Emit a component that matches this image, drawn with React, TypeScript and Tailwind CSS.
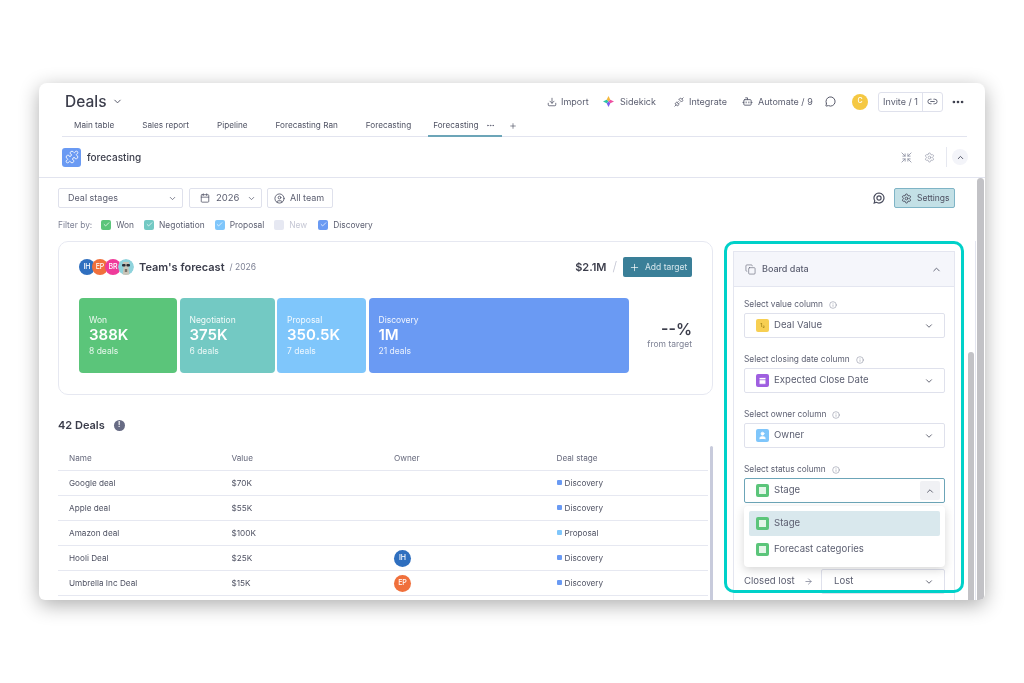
import {
  ArrowRight,
  Bot,
  Calendar,
  Check,
  ChevronDown,
  ChevronUp,
  CircleUser,
  Copy,
  Download,
  Ellipsis,
  Info,
  Link2,
  MessageCircle,
  Plus,
  Puzzle,
  Settings,
  Unplug,
  User,
} from 'lucide-react'
import type {ReactNode} from 'react'

const tabs = ['Main table', 'Sales report', 'Pipeline', 'Forecasting Ran', 'Forecasting']

const filters = [
  {label: 'Won', box: 'bg-[#5bc57a]', gap: 'mr-[10px]'},
  {label: 'Negotiation', box: 'bg-[#73c9c3]', gap: 'mr-[10px]'},
  {label: 'Proposal', box: 'bg-[#7fc6fb]', gap: 'mr-[10px]'},
  {label: 'New', box: 'bg-[#e6e8f2]', gap: 'mr-[11px]', off: true},
  {label: 'Discovery', box: 'bg-[#6a9af3]', gap: ''},
]

const stages = [
  {label: 'Won', value: '388K', deals: '8 deals', cls: 'w-[98px] bg-[#5bc57a]'},
  {label: 'Negotiation', value: '375K', deals: '6 deals', cls: 'w-[95px] bg-[#73c9c3]'},
  {label: 'Proposal', value: '350.5K', deals: '7 deals', cls: 'w-[89px] bg-[#7fc6fb]'},
  {label: 'Discovery', value: '1M', deals: '21 deals', cls: 'w-[260px] bg-[#6a9af3]'},
]

const deals = [
  {name: 'Google deal', value: '$70K', stage: 'Discovery'},
  {name: 'Apple deal', value: '$55K', stage: 'Discovery'},
  {name: 'Amazon deal', value: '$100K', stage: 'Proposal'},
  {name: 'Hooli Deal', value: '$25K', owner: 'IH', stage: 'Discovery'},
  {name: 'Umbrella Inc Deal', value: '$15K', owner: 'EP', stage: 'Discovery'},
]

function SidekickIcon() {
  return (
    <svg width="11" height="11" viewBox="0 0 12 12">
      <path d="M6 0 L8 4 L6 6 L4 4 Z" fill="#f5b83d" />
      <path d="M12 6 L8 8 L6 6 L8 4 Z" fill="#ef4fa0" />
      <path d="M6 12 L4 8 L6 6 L8 8 Z" fill="#7a5cf0" />
      <path d="M0 6 L4 4 L6 6 L4 8 Z" fill="#2fc4a8" />
    </svg>
  )
}

function FocusIcon() {
  return (
    <svg width="11" height="11" viewBox="0 0 12 12" fill="none" stroke="#8d90a2" strokeWidth="0.9" strokeLinecap="round">
      <path d="M1 1 L4.5 4.5 M4.5 2 V4.5 H2" />
      <path d="M11 1 L7.5 4.5 M7.5 2 V4.5 H10" />
      <path d="M1 11 L4.5 7.5 M4.5 10 V7.5 H2" />
      <path d="M11 11 L7.5 7.5 M7.5 10 V7.5 H10" />
    </svg>
  )
}

function ChatGearIcon() {
  return (
    <svg width="12" height="12" viewBox="0 0 12 12" fill="none" stroke="#4a4d5e" strokeWidth="1.2">
      <path d="M6 1 A5 5 0 1 1 3.4 10.3 L1.2 11 L1.8 8.7 A5 5 0 0 1 6 1 Z" />
      <circle cx="6" cy="6" r="2.1" />
    </svg>
  )
}

function PhotoAvatar() {
  return (
    <svg width="16" height="16" viewBox="0 0 16 16" className="-ml-[3px] rounded-full">
      <circle cx="8" cy="8" r="8" fill="#8fd3dc" />
      <path d="M5 3 L11 3 L10.5 9 L11.5 16 L4.5 16 L5.5 9 Z" fill="#c9c5b8" />
      <rect x="4" y="5" width="3.6" height="2.4" rx="1" fill="#2a2d36" />
      <rect x="8.4" y="5" width="3.6" height="2.4" rx="1" fill="#2a2d36" />
      <path d="M6.8 10 H9.2 V13 H6.8 Z" fill="#77726a" />
    </svg>
  )
}

function Avatar({text, cls}: {text: string; cls: string}) {
  return (
    <div className={`flex items-center justify-center rounded-full font-medium text-white ${cls}`}>{text}</div>
  )
}

function ToolbarItem({icon, label, cls}: {icon: ReactNode; label: string; cls: string}) {
  return (
    <div className={`flex items-center text-[9px] text-[#5b5e70] ${cls}`}>
      {icon}
      <span>{label}</span>
    </div>
  )
}

function ColumnIcon({cls, children}: {cls: string; children: ReactNode}) {
  return (
    <div className={`flex h-[13px] w-[13px] flex-shrink-0 items-center justify-center rounded-[2px] ${cls}`}>
      {children}
    </div>
  )
}

function StatusIcon() {
  return (
    <ColumnIcon cls="bg-[#5bc57a]">
      <div className="h-[7px] w-[7px] bg-[#e4f6e9]" />
    </ColumnIcon>
  )
}

function Field({label, children}: {label: string; children: ReactNode}) {
  return (
    <div>
      <div className="flex h-[17px] items-center gap-[6px] text-[8.3px] text-[#5d6072]">
        <span>{label}</span>
        <Info size={8} strokeWidth={1.5} className="text-[#7d8194]" />
      </div>
      {children}
    </div>
  )
}

function ColumnSelect({icon, label}: {icon: ReactNode; label: string}) {
  return (
    <div className="flex h-[25px] items-center rounded-[2px] border border-[#dfe1ec] pl-[11px] pr-[10px] text-[9.6px] text-[#5b5e70]">
      {icon}
      <span className="ml-[5px] flex-1">{label}</span>
      <ChevronDown size={10} className="text-[#4a4d5e]" />
    </div>
  )
}

export default function App() {
  return (
    <div className="h-[683px] w-[1024px] overflow-hidden bg-white pl-[39px] pt-[83px] font-['Inter','Liberation_Sans',sans-serif]">
      <div className="flex h-[517px] w-[946px] flex-col overflow-hidden rounded-t-[8px] rounded-b-[6px] bg-white shadow-[0_5px_20px_rgba(0,0,0,0.32)] blur-[0.4px]">
        {/* top bar */}
        <div className="flex h-[32px] flex-shrink-0 items-center pl-[26px] pr-[20px] pt-[5px]">
          <span className="text-[15.5px] font-medium text-[#3b3d4b]">Deals</span>
          <ChevronDown size={11} className="ml-[5px] text-[#4a4d5e]" />
          <div className="flex-1" />
          <ToolbarItem cls="w-[56px] gap-[4px]" icon={<Download size={10} />} label="Import" />
          <ToolbarItem cls="w-[71px] gap-[6px]" icon={<SidekickIcon />} label="Sidekick" />
          <ToolbarItem cls="w-[68px] gap-[5px]" icon={<Unplug size={10} />} label="Integrate" />
          <ToolbarItem cls="w-[83px] gap-[5px]" icon={<Bot size={11} />} label="Automate / 9" />
          <MessageCircle size={11} className="text-[#4a4d5e]" />
          <Avatar text="C" cls="ml-[16px] h-[16px] w-[16px] bg-[#f5c842] text-[7px]" />
          <div className="ml-[10px] flex h-[20px] items-center rounded-[3px] border border-[#dfe1ec] text-[9px] text-[#5b5e70]">
            <span className="flex h-full w-[44px] items-center justify-center border-r border-[#dfe1ec]">Invite / 1</span>
            <span className="flex w-[19px] items-center justify-center">
              <Link2 size={11} />
            </span>
          </div>
          <Ellipsis size={14} strokeWidth={2.6} className="ml-[8px] text-[#3b3d4b]" />
        </div>

        {/* tabs */}
        <div className="ml-[23px] mr-[18px] flex h-[22px] flex-shrink-0 items-stretch border-b border-[#e2e4ef] text-[8.2px] text-[#4f5263]">
          {tabs.map((tab, i) => (
            <div key={tab} className={`flex items-center pr-[14px] ${i === 0 ? 'pl-[12px]' : 'pl-[14px]'}`}>
              {tab}
            </div>
          ))}
          <div className="-mb-px ml-[3px] flex w-[74px] items-center border-b-2 border-[#6ca5b8] pl-[5px]">
            <span>Forecasting</span>
            <Ellipsis size={9} className="ml-auto mr-[7px] text-[#5b5e70]" />
          </div>
          <div className="ml-[7px] flex items-center">
            <Plus size={8} />
          </div>
        </div>

        {/* view title */}
        <div className="flex h-[41px] flex-shrink-0 items-center border-b border-[#e2e4ef] pl-[23px] pr-[17px]">
          <div className="flex h-[19px] w-[19px] items-center justify-center rounded-[3px] bg-[#6a9af3]">
            <Puzzle size={14} className="text-white" strokeWidth={1.5} />
          </div>
          <span className="ml-[6px] text-[10px] font-medium text-[#3b3d4b]">forecasting</span>
          <div className="flex-1" />
          <FocusIcon />
          <Settings size={11} className="ml-[12px] text-[#8d90a2]" strokeWidth={1.3} />
          <div className="ml-[11px] h-[20px] w-px bg-[#e6e8f0]" />
          <div className="ml-[5px] flex h-[16px] w-[16px] items-center justify-center rounded-full bg-[#f3f4f9]">
            <ChevronUp size={9} className="text-[#4a4d5e]" strokeWidth={2.5} />
          </div>
        </div>

        {/* body */}
        <div className="flex min-h-0 flex-1">
          <div className="flex min-w-0 flex-1 flex-col pl-[19px] pr-[21px] pt-[10px]">
            {/* controls */}
            <div className="flex h-[20px] flex-shrink-0 items-stretch text-[9px] text-[#5b5e70]">
              <div className="flex w-[125px] items-center justify-between rounded-[2px] border border-[#dfe1ec] pl-[9px] pr-[5px]">
                <span>Deal stages</span>
                <ChevronDown size={9} />
              </div>
              <div className="ml-[6px] flex w-[73px] items-center rounded-[2px] border border-[#dfe1ec] pl-[10px] pr-[5px]">
                <Calendar size={10} />
                <span className="ml-[6px] flex-1 text-[9.5px]">2026</span>
                <ChevronDown size={9} />
              </div>
              <div className="ml-[5px] flex w-[66px] items-center rounded-[2px] border border-[#dfe1ec] pl-[6px]">
                <CircleUser size={11} />
                <span className="ml-[5px]">All team</span>
              </div>
              <div className="flex-1" />
              <div className="flex items-center">
                <ChatGearIcon />
              </div>
              <div className="ml-[9px] flex w-[61px] items-center gap-[5px] rounded-[2px] border border-[#7fb4c6] bg-[#c3e0e6] pl-[6px] text-[#4f5263]">
                <Settings size={11} />
                <span className="text-[8.5px]">Settings</span>
              </div>
            </div>

            {/* filters */}
            <div className="mt-[9px] flex h-[16px] flex-shrink-0 items-center text-[8.4px] text-[#5b5e70]">
              <span className="mr-[9px] text-[#7d8194]">Filter by:</span>
              {filters.map((f) => (
                <div key={f.label} className={`flex items-center gap-[5px] ${f.gap}`}>
                  <div className={`flex h-[10px] w-[10px] items-center justify-center rounded-[2px] ${f.box}`}>
                    {!f.off && <Check size={7} strokeWidth={2.5} className="text-white" />}
                  </div>
                  <span className={f.off ? 'text-[#c5c7d4]' : ''}>{f.label}</span>
                </div>
              ))}
            </div>

            <div className="mt-[8px] flex min-h-0 flex-1">
              {/* left column */}
              <div className="w-[655px] flex-shrink-0">
                <div className="h-[154px] rounded-[10px] border border-[#e6e8f1] px-[20px] pt-[15px]">
                  <div className="flex h-[20px] items-center">
                    <Avatar text="IH" cls="h-[16px] w-[16px] bg-[#2f6fbf] text-[7px]" />
                    <Avatar text="EP" cls="-ml-[3px] h-[16px] w-[16px] bg-[#f0703c] text-[7px]" />
                    <Avatar text="BR" cls="-ml-[3px] h-[16px] w-[16px] bg-[#ef3b9a] text-[7px]" />
                    <PhotoAvatar />
                    <span className="ml-[5px] text-[11px] font-semibold text-[#3b3d4b]">Team's forecast</span>
                    <span className="ml-[5px] text-[8.5px] text-[#7d8194]">/ 2026</span>
                    <div className="flex-1" />
                    <span className="text-[11px] font-semibold text-[#3b3d4b]">$2.1M</span>
                    <span className="ml-[6px] text-[13px] font-light text-[#c5c7d4]">/</span>
                    <div className="ml-[6px] flex h-[20px] w-[69px] items-center gap-[5px] rounded-[2px] bg-[#3a7f98] pl-[6px] text-[8.5px] text-[#d5e6ec]">
                      <Plus size={11} strokeWidth={1.5} className="text-white" />
                      <span>Add target</span>
                    </div>
                  </div>
                  <div className="mt-[21px] flex items-stretch gap-[2.5px]">
                    {stages.map((s) => (
                      <div key={s.label} className={`h-[75px] rounded-[4px] pl-[10px] pt-[16px] text-white ${s.cls}`}>
                        <div className="text-[8.5px] leading-[12px] opacity-90">{s.label}</div>
                        <div className="text-[15px] font-semibold leading-[18px]">{s.value}</div>
                        <div className="text-[8.5px] leading-[14px] opacity-85">{s.deals}</div>
                      </div>
                    ))}
                    <div className="-mt-[2px] flex flex-1 flex-col items-end justify-center">
                      <span className="text-[16px] font-semibold leading-[18px] text-[#3b3d4b]">--%</span>
                      <span className="text-[8.5px] leading-[12px] text-[#7d8194]">from target</span>
                    </div>
                  </div>
                </div>

                {/* deals table */}
                <div className="mt-[21px] flex h-[18px] items-center">
                  <span className="text-[11px] font-semibold text-[#3b3d4b]">42 Deals</span>
                  <div className="ml-[9px] flex h-[11px] w-[11px] items-center justify-center rounded-full bg-[#676b84] text-[7px] font-bold text-white">
                    !
                  </div>
                </div>
                <div className="relative mt-[12px] w-[650px] text-[8.2px] text-[#4f5263]">
                  <div className="absolute -right-[5px] top-0 h-[160px] w-[3px] rounded-full bg-[#c8cbdc]" />
                  <div className="grid h-[25px] grid-cols-[162.5px_162.5px_162.5px_1fr] items-center border-b border-[#e6e8f1] pl-[11px] pt-[1px] text-[#66697c]">
                    <span>Name</span>
                    <span>Value</span>
                    <span>Owner</span>
                    <span>Deal stage</span>
                  </div>
                  {deals.map((d) => (
                    <div key={d.name} className="grid h-[25px] grid-cols-[162.5px_162.5px_162.5px_1fr] items-center border-b border-[#e6e8f1] pl-[11px]">
                      <span>{d.name}</span>
                      <span>{d.value}</span>
                      <span>
                        {d.owner === 'IH' && <Avatar text="IH" cls="h-[17px] w-[17px] bg-[#2f6fbf] text-[7px]" />}
                        {d.owner === 'EP' && <Avatar text="EP" cls="h-[17px] w-[17px] bg-[#f0703c] text-[7px]" />}
                      </span>
                      <span className="flex items-center gap-[3px]">
                        <span className={`h-[5px] w-[5px] rounded-[1px] ${d.stage === 'Proposal' ? 'bg-[#7fc6fb]' : 'bg-[#6a9af3]'}`} />
                        {d.stage}
                      </span>
                    </div>
                  ))}
                </div>
              </div>

              {/* board data panel */}
              <div className="relative ml-[20px] flex-1 pt-[10px]">
                <div className="absolute -left-[9px] -right-[9px] bottom-[7px] top-0 z-10 rounded-[10px] border-[3px] border-[#00d1c9]" />
                <div className="h-full border-x border-[#e4e6f0]">
                  <div className="flex h-[36px] items-center justify-between border-y border-[#e4e6f0] bg-[#f5f6fb] pl-[11px] pr-[12px] text-[9px] text-[#5b5e70]">
                    <div className="flex items-center gap-[6px]">
                      <Copy size={11} strokeWidth={1.3} />
                      <span className="font-medium">Board data</span>
                    </div>
                    <ChevronUp size={11} />
                  </div>
                  <div className="relative flex flex-col gap-[13px] pl-[10px] pr-[9px] pt-[9px]">
                    <Field label="Select value column">
                      <ColumnSelect
                        label="Deal Value"
                        icon={
                          <ColumnIcon cls="bg-[#f7cf52]">
                            <span className="text-[5px] font-bold text-[#a88a1f]">1₂</span>
                          </ColumnIcon>
                        }
                      />
                    </Field>
                    <Field label="Select closing date column">
                      <ColumnSelect
                        label="Expected Close Date"
                        icon={
                          <ColumnIcon cls="bg-[#9f5fe0]">
                            <Calendar size={9} className="text-white" fill="#fff" stroke="#9f5fe0" />
                          </ColumnIcon>
                        }
                      />
                    </Field>
                    <Field label="Select owner column">
                      <ColumnSelect
                        label="Owner"
                        icon={
                          <ColumnIcon cls="bg-[#7fc6fb]">
                            <User size={9} className="text-white" fill="#fff" />
                          </ColumnIcon>
                        }
                      />
                    </Field>
                    <div>
                      <div className="flex h-[17px] items-center gap-[6px] text-[8.3px] text-[#5d6072]">
                        <span>Select status column</span>
                        <Info size={8} strokeWidth={1.5} className="text-[#7d8194]" />
                      </div>
                      <div className="flex h-[25px] items-center rounded-[2px] border border-[#6ca5b8] pl-[11px] pr-[4px] text-[9.6px] text-[#5b5e70]">
                        <StatusIcon />
                        <span className="ml-[5px] flex-1">Stage</span>
                        <div className="flex h-[19px] w-[20px] items-center justify-center rounded-[2px] bg-[#f0f1f4]">
                          <ChevronUp size={10} className="text-[#4a4d5e]" />
                        </div>
                      </div>
                    </div>
                    <div className="mt-[53px] flex h-[25px] items-center text-[9.6px] text-[#5b5e70]">
                      <span className="w-[60px]">Closed lost</span>
                      <ArrowRight size={9} className="text-[#7d8194]" />
                      <div className="ml-[8px] flex h-full flex-1 items-center justify-between rounded-[2px] border border-[#dfe1ec] pl-[12px] pr-[10px]">
                        <span>Lost</span>
                        <ChevronDown size={10} className="text-[#4a4d5e]" />
                      </div>
                    </div>
                    {/* open dropdown */}
                    <div className="absolute left-[10px] right-[9px] top-[219px] rounded-[4px] bg-white p-[5px] text-[9.6px] text-[#5b5e70] shadow-[0_3px_10px_rgba(0,0,0,0.16)]">
                      <div className="flex h-[25px] items-center gap-[5px] rounded-[2px] bg-[#d9e8ed] pl-[7px]">
                        <StatusIcon />
                        <span>Stage</span>
                      </div>
                      <div className="flex h-[26px] items-center gap-[5px] pl-[7px]">
                        <StatusIcon />
                        <span>Forecast categories</span>
                      </div>
                    </div>
                  </div>
                </div>
              </div>

              {/* panel scrollbar */}
              <div className="relative -mr-[21px] ml-[13px] w-[8px] flex-shrink-0 border-r border-[#e4e6f0]">
                <div className="absolute bottom-0 left-0 top-[111px] w-[6px] rounded-t-full bg-[#c2c2c6]" />
              </div>
            </div>
          </div>

          {/* page scrollbar */}
          <div className="w-[9px] flex-shrink-0 pl-[1px] pr-[1px]">
            <div className="h-full rounded-t-full bg-[#c2c2c6]" />
          </div>
        </div>
      </div>
    </div>
  )
}
